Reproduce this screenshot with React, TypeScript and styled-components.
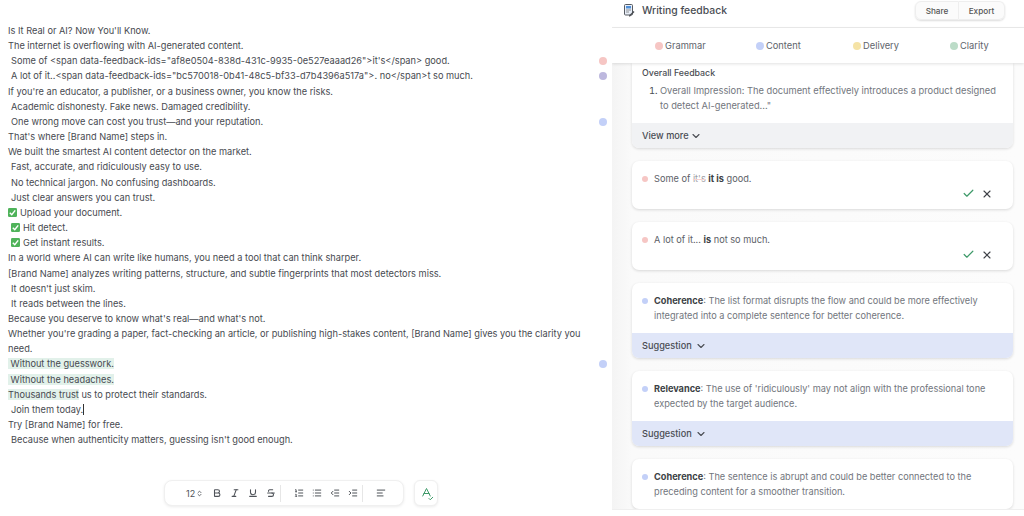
import styled, { createGlobalStyle } from "styled-components";
import {
  AlignLeft,
  Bold,
  Check,
  ChevronDown,
  ChevronsUpDown,
  IndentDecrease,
  IndentIncrease,
  Italic,
  List,
  ListOrdered,
  SpellCheck,
  Strikethrough,
  Underline,
  X,
} from "lucide-react";

const COLORS = {
  grammar: "#f6c6c4",
  content: "#c3d0f8",
  delivery: "#f5e3a6",
  clarity: "#bcdcc8",
  mixed: "#bdb8de",
};

type DotKind = keyof typeof COLORS;

type LineData = {
  text?: string;
  pad?: boolean;
  dot?: DotKind;
  tick?: boolean;
};

const LINES: LineData[] = [
  { text: "Is It Real or AI? Now You'll Know." },
  { text: "The internet is overflowing with AI-generated content." },
  {
    text: 'Some of <span data-feedback-ids="af8e0504-838d-431c-9935-0e527eaaad26">it\'s</span> good.',
    pad: true,
    dot: "grammar",
  },
  {
    text: 'A lot of it..<span data-feedback-ids="bc570018-0b41-48c5-bf33-d7b4396a517a">. no</span>t so much.',
    pad: true,
    dot: "mixed",
  },
  { text: "If you're an educator, a publisher, or a business owner, you know the risks." },
  { text: "Academic dishonesty. Fake news. Damaged credibility.", pad: true },
  { text: "One wrong move can cost you trust—and your reputation.", pad: true, dot: "content" },
  { text: "That's where [Brand Name] steps in." },
  { text: "We built the smartest AI content detector on the market." },
  { text: "Fast, accurate, and ridiculously easy to use.", pad: true },
  { text: "No technical jargon. No confusing dashboards.", pad: true },
  { text: "Just clear answers you can trust.", pad: true },
  { text: "Upload your document.", tick: true },
  { text: "Hit detect.", tick: true, pad: true },
  { text: "Get instant results.", tick: true, pad: true },
  { text: "In a world where AI can write like humans, you need a tool that can think sharper." },
  { text: "[Brand Name] analyzes writing patterns, structure, and subtle fingerprints that most detectors miss." },
  { text: "It doesn't just skim.", pad: true },
  { text: "It reads between the lines.", pad: true },
  { text: "Because you deserve to know what's real—and what's not." },
  {
    text: "Whether you're grading a paper, fact-checking an article, or publishing high-stakes content, [Brand Name] gives you the clarity you need.",
  },
];

const GlobalStyle = createGlobalStyle`
  html, body {
    margin: 0;
    height: 100%;
    overflow: hidden;
    background: #fff;
  }
  body {
    font-family: Inter, "Liberation Sans", sans-serif;
    color: #4b4f57;
  }
  * {
    box-sizing: border-box;
  }
`;

const Page = styled.div`
  display: flex;
  width: 1024px;
  height: 516px;
  overflow: hidden;
`;

const Editor = styled.div`
  display: flex;
  flex-direction: column;
  width: 612px;
  height: 516px;
  flex-shrink: 0;
  background: #fff;
`;

const Doc = styled.div`
  flex: 1;
  padding: 23px 0 0 8px;
  font-size: 9.23px;
  line-height: 15.15px;
  color: #474a50;
`;

const Line = styled.div`
  display: grid;
  grid-template-columns: 576px 1fr;
`;

const LineText = styled.div<{ $pad?: boolean }>`
  padding-left: ${(p) => (p.$pad ? "3px" : "0")};
  white-space: pre-wrap;
`;

const Gutter = styled.div`
  display: flex;
  justify-content: center;
  padding-top: 4px;
  width: 24px;
  margin-left: 7px;
`;

const Dot = styled.span<{ $kind: DotKind; $size?: number }>`
  display: inline-block;
  width: ${(p) => p.$size ?? 8}px;
  height: ${(p) => p.$size ?? 8}px;
  border-radius: 50%;
  background: ${(p) => COLORS[p.$kind]};
  flex-shrink: 0;
`;

const Tick = styled.svg`
  width: 9px;
  height: 9px;
  margin-right: 3px;
  vertical-align: -1px;
`;

const Mark = styled.span`
  background: #e2f1ea;
`;

const Caret = styled.span`
  border-right: 1px solid #333;
`;

const BottomBar = styled.div`
  display: flex;
  gap: 10px;
  padding: 0 0 10px 164px;
`;

const Toolbar = styled.div`
  display: flex;
  align-items: center;
  width: 240px;
  height: 26px;
  padding-left: 21px;
  background: #fff;
  border: 1px solid #f0f0f0;
  border-radius: 8px;
  box-shadow: 0 1px 3px rgba(0, 0, 0, 0.08);
  color: #4f5359;
`;

const SizeLabel = styled.span`
  display: flex;
  align-items: center;
  gap: 1px;
  font-size: 9px;
  width: 31px;
`;

const ToolGroup = styled.div<{ $gap: number; $border?: boolean }>`
  display: flex;
  align-items: center;
  gap: ${(p) => p.$gap}px;
  height: 17px;
  padding-right: 4px;
  margin-right: 13px;
  border-right: ${(p) => (p.$border ? "1px solid #e6e6e6" : "none")};
`;

const CheckButton = styled.div`
  display: flex;
  align-items: center;
  justify-content: center;
  width: 24px;
  height: 26px;
  background: #fff;
  border: 1px solid #f0f0f0;
  border-radius: 6px;
  box-shadow: 0 1px 3px rgba(0, 0, 0, 0.08);
  color: #3d9a68;
`;

const Panel = styled.div`
  display: flex;
  flex-direction: column;
  flex: 1;
  height: 516px;
  overflow: hidden;
  background: linear-gradient(90deg, #f4f4f4 0, #fafafa 20px, #fcfcfc 100%);
`;

const Header = styled.div`
  display: flex;
  align-items: center;
  justify-content: space-between;
  height: 28px;
  flex-shrink: 0;
  padding: 0 19px 6px 12px;
  background: #fff;
  border-bottom: 1px solid #ececec;
`;

const Title = styled.div`
  display: flex;
  align-items: center;
  gap: 7px;
  font-size: 10.4px;
  font-weight: 500;
  color: #4a4d53;
`;

const BtnGroup = styled.div`
  display: flex;
  height: 19px;
  border-radius: 6px;
  box-shadow: 0 1px 2px rgba(0, 0, 0, 0.14);
`;

const HeaderBtn = styled.div<{ $w: number }>`
  display: flex;
  align-items: center;
  justify-content: center;
  width: ${(p) => p.$w}px;
  font-size: 8.2px;
  font-weight: 500;
  color: #555;
  background: #fbfbfb;
  border: 1px solid #eeeeee;
  &:first-child {
    border-radius: 6px 0 0 6px;
  }
  &:last-child {
    border-radius: 0 6px 6px 0;
    border-left: none;
  }
`;

const Tabs = styled.div`
  position: relative;
  z-index: 1;
  display: grid;
  grid-template-columns: 101px 97px 97px 1fr;
  align-items: center;
  height: 35px;
  flex-shrink: 0;
  padding-left: 43px;
  background: #fff;
  box-shadow: 0 1px 3px rgba(0, 0, 0, 0.12);
`;

const Tab = styled.div`
  display: flex;
  align-items: center;
  gap: 2px;
  font-size: 9.3px;
  color: #60646b;
`;

const Cards = styled.div`
  display: flex;
  flex-direction: column;
  flex: 1;
  gap: 13.1px;
  min-height: 0;
  overflow: hidden;
  padding: 0 11px 0 20px;
`;

const Card = styled.div`
  flex-shrink: 0;
  background: #fff;
  border-radius: 7px;
  box-shadow: 0 1px 3px rgba(0, 0, 0, 0.14);
  overflow: hidden;
`;

const OverallCard = styled(Card)`
  border-radius: 0 0 7px 7px;
`;

const OverallBody = styled.div`
  height: 60px;
  padding: 3px 10px 0;
`;

const OverallTitle = styled.div`
  font-size: 8.8px;
  font-weight: 500;
  line-height: 13px;
  color: #4a4d53;
`;

const OverallList = styled.ol`
  margin: 4px 0 0;
  padding: 0 3px 0 18px;
  font-size: 9.3px;
  line-height: 15px;
  color: #72767d;
  & li::marker {
    color: #4a4d53;
  }
`;

const CardFoot = styled.div<{ $tone: "grey" | "blue" }>`
  display: flex;
  align-items: center;
  gap: ${(p) => (p.$tone === "blue" ? 3 : 1)}px;
  height: 25px;
  padding-left: 10px;
  font-size: 9.2px;
  font-weight: 500;
  color: #4a4d53;
  background: ${(p) => (p.$tone === "blue" ? "#e0e6f8" : "#f1f2f4")};
`;

const Row = styled.div`
  display: flex;
  gap: 6px;
  padding: 0 10px;
`;

const RowDot = styled.div`
  display: flex;
  align-items: flex-start;
  padding-top: 4.5px;
`;

const FixCard = styled(Card)`
  height: 48px;
  padding-top: 10px;
`;

const NoteBody = styled.div`
  height: 50px;
  padding-top: 10px;
`;

const Msg = styled.div`
  font-size: 9.2px;
  line-height: 15px;
  color: #72767d;
  & b {
    font-weight: 700;
    color: #3c3f45;
  }
`;

const FixMsg = styled(Msg)`
  color: #5d6168;
`;

const Strike = styled.span`
  text-decoration: line-through;
  text-decoration-color: #f3b6b4;
  opacity: 0.6;
`;

const Actions = styled.div`
  display: flex;
  justify-content: flex-end;
  align-items: center;
  gap: 6px;
  padding: 1px 20px 0 0;
`;

const Footer = styled.div`
  height: 7px;
  flex-shrink: 0;
  background: #fff;
  border-top: 1px solid #efefef;
`;

function TickBox() {
  return (
    <Tick viewBox="0 0 10 10">
      <rect width="10" height="10" rx="1.5" fill="#4fb35a" />
      <path d="M2 5.2 4.2 7.5 8 2.6" fill="none" stroke="#fff" strokeWidth="1.6" />
    </Tick>
  );
}

function NoteIcon() {
  return (
    <svg width="11" height="13" viewBox="0 0 11 13">
      <rect x="0.5" y="0.5" width="8" height="10.5" rx="1" fill="#e8eef8" stroke="#555a61" />
      <rect x="2" y="2" width="5" height="2.5" fill="#4f8fd8" />
      <path d="M2 6h5M2 8h3" stroke="#777" strokeWidth="0.8" />
      <path d="M5 11.5 9.5 7l1 1L6 12.5H5z" fill="#4a4d53" />
    </svg>
  );
}

function Decision() {
  return (
    <Actions>
      <Check size={13} color="#3f9a6a" strokeWidth={2.2} />
      <X size={12} color="#3f4248" strokeWidth={2.2} />
    </Actions>
  );
}

function Note({ dot, title, text, foot }: { dot: DotKind; title: string; text: string; foot?: boolean }) {
  return (
    <Card>
      <NoteBody>
        <Row>
          <RowDot>
            <Dot $kind={dot} $size={6} />
          </RowDot>
          <Msg>
            <b>{title}</b>: {text}
          </Msg>
        </Row>
      </NoteBody>
      {foot && (
        <CardFoot $tone="blue">
          Suggestion <ChevronDown size={12} strokeWidth={2.2} />
        </CardFoot>
      )}
    </Card>
  );
}

export default function App() {
  return (
    <Page>
      <GlobalStyle />
      <Editor>
        <Doc>
          {LINES.map((line) => (
            <Line key={line.text}>
              <LineText $pad={line.pad}>
                {line.tick && <TickBox />}
                {line.text}
              </LineText>
              <Gutter>{line.dot && <Dot $kind={line.dot} />}</Gutter>
            </Line>
          ))}
          <Line>
            <LineText>
              <Mark> Without the guesswork.</Mark>
            </LineText>
            <Gutter>
              <Dot $kind="content" />
            </Gutter>
          </Line>
          <Line>
            <LineText>
              <Mark> Without the headaches.</Mark>
            </LineText>
          </Line>
          <Line>
            <LineText>
              <Mark>Thousands trust</Mark> us to protect their standards.
            </LineText>
          </Line>
          <Line>
            <LineText $pad>
              <Caret>Join them today.</Caret>
            </LineText>
          </Line>
          <Line>
            <LineText>Try [Brand Name] for free.</LineText>
          </Line>
          <Line>
            <LineText $pad>Because when authenticity matters, guessing isn't good enough.</LineText>
          </Line>
        </Doc>
        <BottomBar>
          <Toolbar>
            <SizeLabel>
              12 <ChevronsUpDown size={7} strokeWidth={3} />
            </SizeLabel>
            <ToolGroup $gap={8} $border>
              <Bold size={10} strokeWidth={2.6} />
              <Italic size={10} strokeWidth={2.6} />
              <Underline size={10} strokeWidth={2.6} />
              <Strikethrough size={10} strokeWidth={2.6} />
            </ToolGroup>
            <ToolGroup $gap={8} $border>
              <ListOrdered size={10} strokeWidth={2.4} />
              <List size={10} strokeWidth={2.4} />
              <IndentDecrease size={10} strokeWidth={2.4} />
              <IndentIncrease size={10} strokeWidth={2.4} />
            </ToolGroup>
            <ToolGroup $gap={0}>
              <AlignLeft size={10} strokeWidth={2.4} />
            </ToolGroup>
          </Toolbar>
          <CheckButton>
            <SpellCheck size={15} strokeWidth={1.6} />
          </CheckButton>
        </BottomBar>
      </Editor>
      <Panel>
        <Header>
          <Title>
            <NoteIcon />
            Writing feedback
          </Title>
          <BtnGroup>
            <HeaderBtn $w={44}>Share</HeaderBtn>
            <HeaderBtn $w={46}>Export</HeaderBtn>
          </BtnGroup>
        </Header>
        <Tabs>
          <Tab>
            <Dot $kind="grammar" /> Grammar
          </Tab>
          <Tab>
            <Dot $kind="content" /> Content
          </Tab>
          <Tab>
            <Dot $kind="delivery" /> Delivery
          </Tab>
          <Tab>
            <Dot $kind="clarity" /> Clarity
          </Tab>
        </Tabs>
        <Cards>
          <OverallCard>
            <OverallBody>
              <OverallTitle>Overall Feedback</OverallTitle>
              <OverallList>
                <li>Overall Impression: The document effectively introduces a product designed to detect AI-generated..."</li>
              </OverallList>
            </OverallBody>
            <CardFoot $tone="grey">
              View more <ChevronDown size={12} strokeWidth={2.2} />
            </CardFoot>
          </OverallCard>
          <FixCard>
            <Row>
              <RowDot>
                <Dot $kind="grammar" $size={6} />
              </RowDot>
              <FixMsg>
                Some of <Strike>it's</Strike> <b>it is</b> good.
              </FixMsg>
            </Row>
            <Decision />
          </FixCard>
          <FixCard>
            <Row>
              <RowDot>
                <Dot $kind="grammar" $size={6} />
              </RowDot>
              <FixMsg>
                A lot of it... <b>is</b> not so much.
              </FixMsg>
            </Row>
            <Decision />
          </FixCard>
          <Note
            dot="content"
            title="Coherence"
            text="The list format disrupts the flow and could be more effectively integrated into a complete sentence for better coherence."
            foot
          />
          <Note
            dot="content"
            title="Relevance"
            text="The use of 'ridiculously' may not align with the professional tone expected by the target audience."
            foot
          />
          <Note
            dot="content"
            title="Coherence"
            text="The sentence is abrupt and could be better connected to the preceding content for a smoother transition."
          />
        </Cards>
        <Footer />
      </Panel>
    </Page>
  );
}
